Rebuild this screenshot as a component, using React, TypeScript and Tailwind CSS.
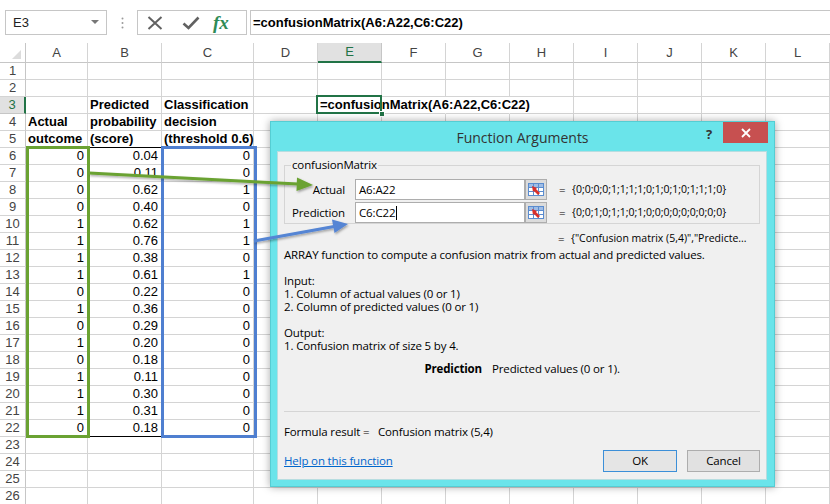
import React from 'react';

const cols = ['A', 'B', 'C', 'D', 'E', 'F', 'G', 'H', 'I', 'J', 'K', 'L'];

const actual = [0, 0, 0, 0, 1, 1, 1, 1, 0, 1, 0, 1, 0, 1, 1, 1, 0];
const score = ['0.04', '0.11', '0.62', '0.40', '0.62', '0.76', '0.38', '0.61', '0.22', '0.36', '0.29', '0.20', '0.18', '0.11', '0.30', '0.31', '0.18'];
const decision = [0, 0, 1, 0, 1, 1, 0, 1, 0, 0, 0, 0, 0, 0, 0, 0, 0];

const headers: Record<string, string> = {
  B3: 'Predicted',
  C3: 'Classification',
  A4: 'Actual',
  B4: 'probability',
  C4: 'decision',
  A5: 'outcome',
  B5: '(score)',
  C5: '(threshold 0.6)',
};

function Cell({ r, c }: { r: number; c: string }) {
  const key = c + r;
  let text: React.ReactNode = null;
  let right = false;
  let bold = false;

  if (r >= 6 && r <= 22) {
    const i = r - 6;
    if (c === 'A') text = actual[i];
    if (c === 'B') text = score[i];
    if (c === 'C') text = decision[i];
    right = text !== null;
  } else if (headers[key]) {
    text = headers[key];
    bold = true;
  }

  const noRight = r === 3 && (c === 'E' || c === 'F' || c === 'G');
  const blackBottom = (r === 5 && (c === 'A' || c === 'B' || c === 'C')) || (r === 22 && c === 'B');

  return (
    <div
      className={
        'relative h-[17px] leading-[16px] text-[13px] text-black whitespace-nowrap ' +
        (noRight ? 'border-r border-r-transparent ' : 'border-r border-r-[#d4d4d4] ') +
        (blackBottom ? 'border-b border-b-black ' : 'border-b border-b-[#d4d4d4] ') +
        (right ? 'text-right pr-[3px] ' : 'pl-[2px] ') +
        (bold ? 'font-bold' : '')
      }
    >
      {text}
      {key === 'E3' && (
        <>
          <span className="absolute left-[2px] top-0 z-10 font-bold">=confusionMatrix(A6:A22,C6:C22)</span>
          <div className="pointer-events-none absolute -left-[2px] -top-[2px] -right-[1px] -bottom-[1px] z-10 border-2 border-[#217346]" />
          <div className="absolute -right-[4px] -bottom-[4px] z-20 h-[6px] w-[6px] border border-white bg-[#217346]" />
        </>
      )}
    </div>
  );
}

function RangeButton() {
  return (
    <div className="flex h-[21px] w-[22px] items-center justify-center border border-[#adadad] bg-[#dcdcdc]">
      <svg width="16" height="13" viewBox="0 0 16 13">
        <rect x="0.5" y="0.5" width="15" height="12" fill="#ffffff" stroke="#5b8ccf" />
        <rect x="1" y="1" width="14" height="3" fill="#9fbde6" />
        <line x1="0.5" y1="4.5" x2="15.5" y2="4.5" stroke="#5b8ccf" />
        <line x1="0.5" y1="8.5" x2="15.5" y2="8.5" stroke="#5b8ccf" />
        <line x1="5.5" y1="0.5" x2="5.5" y2="12.5" stroke="#5b8ccf" />
        <line x1="10.5" y1="0.5" x2="10.5" y2="12.5" stroke="#5b8ccf" />
        <polygon points="4,3 9,5 8,6 12,10 10,12 6,8 5,9" fill="#d9302a" />
      </svg>
    </div>
  );
}

function ArgRow({ label, value, result, caret }: { label: string; value: string; result: string; caret?: boolean }) {
  return (
    <div className="flex h-[21px] items-center">
      <div className="w-[62px] pr-[1px] text-right">{label}</div>
      <div className="ml-[9px] flex h-[21px] w-[170px] items-center border border-[#adadad] bg-white pl-[3px]">
        {value}
        {caret && <span className="ml-[1px] h-[14px] w-px bg-black" />}
      </div>
      <RangeButton />
      <div className="ml-[12px] w-[13px]">=</div>
      <div className="whitespace-nowrap text-[10.5px] tracking-normal">{result}</div>
    </div>
  );
}

function Dialog() {
  return (
    <div className="absolute left-[270px] top-[121px] z-30 h-[366px] w-[505px] border border-[#55cdd3] bg-[#6ae4ea] font-['Open_Sans',sans-serif] text-[11.5px] tracking-[-0.15px] text-black shadow-[0_0_8px_rgba(0,0,0,0.35)]">
      <div className="relative h-[29px]">
        <div className="pt-[5px] text-center text-[14px] tracking-normal text-[#333]">Function Arguments</div>
        <div className="absolute left-[435px] top-[3px] text-[13px] font-bold text-[#333]">?</div>
        <div className="absolute left-[452px] top-0 flex h-[21px] w-[45px] items-center justify-center bg-[#c75050]">
          <svg width="10" height="10" viewBox="0 0 10 10">
            <path d="M1 1 L9 9 M9 1 L1 9" stroke="#ffffff" strokeWidth="1.8" />
          </svg>
        </div>
      </div>
      <div className="ml-[6px] h-[329px] w-[490px] border border-[#b7dde0] bg-[#f0f0f0] px-[6px]">
        <div className="relative mt-[13px] h-[59px] border border-[#d5d5d5] pt-[13px]">
          <div className="absolute -top-[9px] left-[6px] bg-[#f0f0f0] px-px leading-[16px]">confusionMatrix</div>
          <div className="-ml-px flex flex-col gap-[2px]">
            <ArgRow label="Actual" value="A6:A22" result="{0;0;0;0;1;1;1;1;0;1;0;1;0;1;1;1;0}" />
            <ArgRow label="Prediction" value="C6:C22" result="{0;0;1;0;1;1;0;1;0;0;0;0;0;0;0;0;0}" caret />
          </div>
        </div>
        <div className="mt-[7px] flex h-[16px] items-center whitespace-nowrap pl-[274px]">
          <div className="w-[13px]">=</div>
          <div className="text-[10.5px] tracking-normal">{'{"Confusion matrix (5,4)","Predicte...'}</div>
        </div>
        <div className="mt-[1px] leading-[13px]">
          <div>ARRAY function to compute a confusion matrix from actual and predicted values.</div>
          <div className="h-[13px]" />
          <div>Input:</div>
          <div>1. Column of actual values (0 or 1)</div>
          <div>2. Column of predicted values (0 or 1)</div>
          <div className="h-[13px]" />
          <div>Output:</div>
          <div>1. Confusion matrix of size 5 by 4.</div>
        </div>
        <div className="mt-[10px] flex leading-[13px]">
          <div className="w-[198px] text-right font-bold">Prediction</div>
          <div className="ml-[10px]">Predicted values (0 or 1).</div>
        </div>
        <div className="mt-[36px] h-px bg-[#d5d5d5]" />
        <div className="mt-[12px] flex leading-[16px]">
          <div className="w-[94px]">Formula result =</div>
          <div>Confusion matrix (5,4)</div>
        </div>
        <div className="mt-[10px] flex items-center">
          <div className="text-[#0066cc] underline">Help on this function</div>
          <div className="ml-auto flex gap-[10px]">
            <div className="flex h-[22px] w-[74px] items-center justify-center border border-[#3c8fd8] bg-[#e5e5e5]">OK</div>
            <div className="flex h-[22px] w-[73px] items-center justify-center border border-[#adadad] bg-[#e1e1e1]">Cancel</div>
          </div>
        </div>
      </div>
    </div>
  );
}

function Toolbar() {
  return (
    <div className="flex h-[43px] items-start pt-[10px] text-[13px]">
      <div className="ml-[5px] flex h-[25px] w-[102px] items-center justify-between border border-[#c6c6c6] pl-[7px] pr-[7px] text-[#222]">
        <span>E3</span>
        <svg width="8" height="5" viewBox="0 0 8 5">
          <polygon points="0,0 8,0 4,4" fill="#777777" />
        </svg>
      </div>
      <div className="flex h-[25px] w-[30px] items-center justify-center">
        <svg width="3" height="12" viewBox="0 0 3 12">
          <circle cx="1.5" cy="1.5" r="1" fill="#9a9a9a" />
          <circle cx="1.5" cy="6" r="1" fill="#9a9a9a" />
          <circle cx="1.5" cy="10.5" r="1" fill="#9a9a9a" />
        </svg>
      </div>
      <div className="flex h-[25px] w-[110px] items-center border border-[#c6c6c6]">
        <svg className="ml-[9px]" width="16" height="14" viewBox="0 0 16 14">
          <path d="M1.5 1 L14.5 13 M14.5 1 L1.5 13" stroke="#616161" strokeWidth="2" />
        </svg>
        <svg className="ml-[19px]" width="18" height="14" viewBox="0 0 18 14">
          <path d="M1.5 7.5 L6.5 12 L16.5 1.5" stroke="#616161" strokeWidth="2.6" fill="none" />
        </svg>
        <span className="ml-[13px] font-['Liberation_Serif',serif] text-[19px] font-bold italic leading-none text-[#2e8b57]">fx</span>
      </div>
      <div className="ml-[3px] flex h-[25px] flex-1 items-center border-y border-l border-[#c6c6c6] pl-[2px] font-bold text-black">
        =confusionMatrix(A6:A22,C6:C22)
      </div>
    </div>
  );
}

function Sheet() {
  const rows = Array.from({ length: 26 }, (_, i) => i + 1);
  return (
    <div className="grid grid-cols-[26px_62px_74px_92px_64px_64px_64px_64px_64px_64px_64px_64px_64px]">
      <div className="relative h-[20px] border-r border-b border-[#c6c6c6]">
        <svg className="absolute right-[4px] bottom-[3px]" width="9" height="9" viewBox="0 0 9 9">
          <polygon points="9,0 9,9 0,9" fill="#dcdcdc" />
        </svg>
      </div>
      {cols.map((c) => (
        <div
          key={c}
          className={
            'flex h-[20px] items-center justify-center text-[13px] ' +
            (c === 'E'
              ? 'border-r border-r-[#c6c6c6] border-b-2 border-b-[#217346] bg-[#e1e1e1] text-[#217346]'
              : 'border-r border-b border-[#d4d4d4] border-b-[#c6c6c6] text-[#444]')
          }
        >
          {c}
        </div>
      ))}
      {rows.map((r) => (
        <React.Fragment key={r}>
          <div
            className={
              'h-[17px] text-center text-[13px] leading-[16px] ' +
              (r === 3
                ? 'border-r-2 border-r-[#217346] border-b border-b-[#c6c6c6] bg-[#e1e1e1] text-[#217346]'
                : 'border-r border-b border-[#d4d4d4] border-r-[#c6c6c6] text-[#444]')
            }
          >
            {r}
          </div>
          {cols.map((c) => (
            <Cell key={c} r={r} c={c} />
          ))}
        </React.Fragment>
      ))}
    </div>
  );
}

function Arrows() {
  return (
    <svg className="pointer-events-none absolute left-0 top-0 z-40" width="830" height="504" viewBox="0 0 830 504">
      <defs>
        <filter id="sh" x="-10%" y="-50%" width="120%" height="200%">
          <feDropShadow dx="1" dy="1.5" stdDeviation="1" floodColor="#000" floodOpacity="0.35" />
        </filter>
      </defs>
      <g filter="url(#sh)">
        <line x1="89" y1="173" x2="298" y2="184" stroke="#6aa232" strokeWidth="3" />
        <polygon points="313,185 297,177.5 296.5,191" fill="#6aa232" />
        <line x1="254" y1="241" x2="334" y2="226.5" stroke="#5585d4" strokeWidth="3" />
        <polygon points="348,224 332,219.5 334.5,233" fill="#5585d4" />
      </g>
    </svg>
  );
}

export default function App() {
  return (
    <div className="relative h-[504px] w-[830px] overflow-hidden bg-white font-['Liberation_Sans',Arial,sans-serif]">
      <Toolbar />
      <Sheet />
      <div className="pointer-events-none absolute left-[26px] top-[146px] h-[292px] w-[64px] border-[3px] border-[#6aa232]" />
      <div className="pointer-events-none absolute left-[161px] top-[146px] h-[292px] w-[96px] border-[3px] border-[#4f7fd0]" />
      <Dialog />
      <Arrows />
    </div>
  );
}
